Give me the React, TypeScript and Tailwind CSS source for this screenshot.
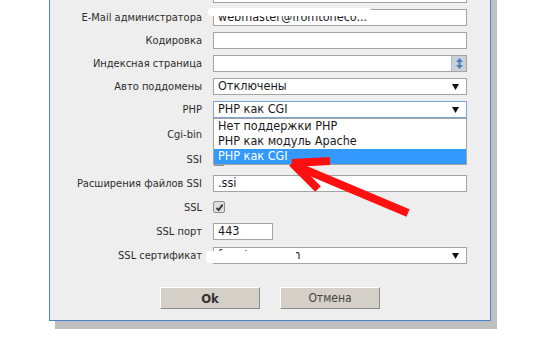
import React from "react";

const F = "font-['DejaVu_Sans_Condensed','DejaVu_Sans',sans-serif]";

function Arrow() {
  return (
    <svg width="7" height="7" viewBox="0 0 7 7" className="block">
      <polygon points="0,1 7,1 3.5,7" fill="#111" />
    </svg>
  );
}

function TextBox({ w = "w-[254px]", children, focus = false }: { w?: string; children?: React.ReactNode; focus?: boolean }) {
  return (
    <div className={`relative ${w} h-[17px] bg-white border ${focus ? "border-[#7ea4d3]" : "border-[#a3a3a3]"} flex items-center pl-[4px] text-[12.5px] text-[#1a1a1a] leading-none`}>
      {children}
    </div>
  );
}

function Select({ value, focus = false }: { value: string; focus?: boolean }) {
  return (
    <div className={`w-[254px] h-[17px] bg-white border ${focus ? "border-[#7ea4d3]" : "border-[#a3a3a3]"} flex items-center justify-between pl-[4px] pr-[7px] text-[12.5px] text-[#1a1a1a] leading-none`}>
      <span>{value}</span>
      <Arrow />
    </div>
  );
}

function Check({ checked = false }: { checked?: boolean }) {
  return (
    <div className="w-[12px] h-[12px] rounded-[2px] border border-[#8e8e8e] bg-[#dedede] flex items-center justify-center">
      {checked && (
        <svg width="9" height="9" viewBox="0 0 9 9">
          <path d="M1.5 4.8 L3.6 7 L7.6 1.6" stroke="#3a3a3a" strokeWidth="1.9" fill="none" />
        </svg>
      )}
    </div>
  );
}

function Row({ label, h, children }: { label: string; h: string; children?: React.ReactNode }) {
  return (
    <div className={`flex items-center ${h}`}>
      <div className="w-[152px] text-right text-[11px] text-[#2d2d2d] leading-none whitespace-nowrap">{label}</div>
      <div className="ml-[11px] flex items-center">{children}</div>
    </div>
  );
}

export default function App() {
  return (
    <div className={`relative w-[543px] h-[348px] overflow-hidden bg-white ${F}`}>
      <div className="ml-[49px] mt-[-18px] w-[442px] border border-[#4d83c4] bg-[#eeeeee] shadow-[6px_8px_0_#c0c0c0]">
        <Row label="Домен" h="h-[23px]">
          <TextBox />
        </Row>
        <Row label="E-Mail администратора" h="h-[23px]">
          <TextBox>
            <span className="relative">
              webmaster@fromtoneco...
              <span className="absolute left-[-10px] right-[-4px] top-[-3px] h-[8px] bg-white rounded-[3px]" />
            </span>
          </TextBox>
        </Row>
        <Row label="Кодировка" h="h-[23px]">
          <TextBox />
        </Row>
        <Row label="Индексная страница" h="h-[23px]">
          <div className="w-[254px] h-[17px] bg-white border border-[#a3a3a3] flex justify-end">
            <div className="w-[15px] h-[15px] bg-[#c9d1db] border-l border-[#b5bec9] flex items-center justify-center">
              <svg width="7" height="11" viewBox="0 0 7 11">
                <polygon points="3.5,0 7,4 0,4" fill="#4a7fb8" />
                <polygon points="0,7 7,7 3.5,11" fill="#4a7fb8" />
                <rect x="2.5" y="3" width="2" height="5" fill="#4a7fb8" />
              </svg>
            </div>
          </div>
        </Row>
        <Row label="Авто поддомены" h="h-[23px]">
          <Select value="Отключены" />
        </Row>
        <Row label="PHP" h="h-[23px]">
          <Select value="PHP как CGI" focus />
        </Row>
        <Row label="Cgi-bin" h="h-[26px]">
          <Check />
        </Row>
        <Row label="SSI" h="h-[25px]">
          <Check />
        </Row>
        <Row label="Расширения файлов SSI" h="h-[23px]">
          <TextBox>.ssi</TextBox>
        </Row>
        <Row label="SSL" h="h-[24px]">
          <Check checked />
        </Row>
        <Row label="SSL порт" h="h-[24px]">
          <TextBox w="w-[60px]">443</TextBox>
        </Row>
        <Row label="SSL сертификат" h="h-[24px]">
          <div className="relative">
            <Select value="fromtoner.com" />
            <div className="absolute left-[-7px] top-[4px] w-[90px] h-[12px] bg-white rounded-l-[3px]" />
          </div>
        </Row>
        <div className="flex justify-center gap-[20px] pt-[20px] pb-[11px]">
          <button className="w-[100px] h-[22px] bg-[#d4d0c8] border border-t-white border-l-white border-b-[#8a8a8a] border-r-[#8a8a8a] text-[13px] font-bold text-[#333] leading-none">
            Ok
          </button>
          <button className="w-[100px] h-[22px] bg-[#d4d0c8] border border-t-white border-l-white border-b-[#8a8a8a] border-r-[#8a8a8a] text-[12px] text-[#444] leading-none">
            Отмена
          </button>
        </div>
      </div>

      {/* dropdown list */}
      <div className="absolute left-[213px] top-[118px] w-[254px] bg-white border border-[#a3a3a3] text-[12.5px] text-[#1a1a1a] leading-none">
        <div className="h-[15px] flex items-center pl-[4px]">Нет поддержки PHP</div>
        <div className="h-[15px] flex items-center pl-[4px]">PHP как модуль Apache</div>
        <div className="h-[15px] flex items-center pl-[4px] bg-[#3399ff] text-white">PHP как CGI</div>
      </div>

      {/* red arrow */}
      <svg className="absolute left-0 top-0 pointer-events-none" width="543" height="348" viewBox="0 0 543 348">
        <g stroke="#ff1010" strokeWidth="8" fill="none" strokeLinecap="butt">
          <line x1="292" y1="163" x2="330" y2="161" />
          <line x1="292" y1="163" x2="318" y2="189" />
          <line x1="294" y1="165" x2="408" y2="213" />
        </g>
      </svg>
    </div>
  );
}
